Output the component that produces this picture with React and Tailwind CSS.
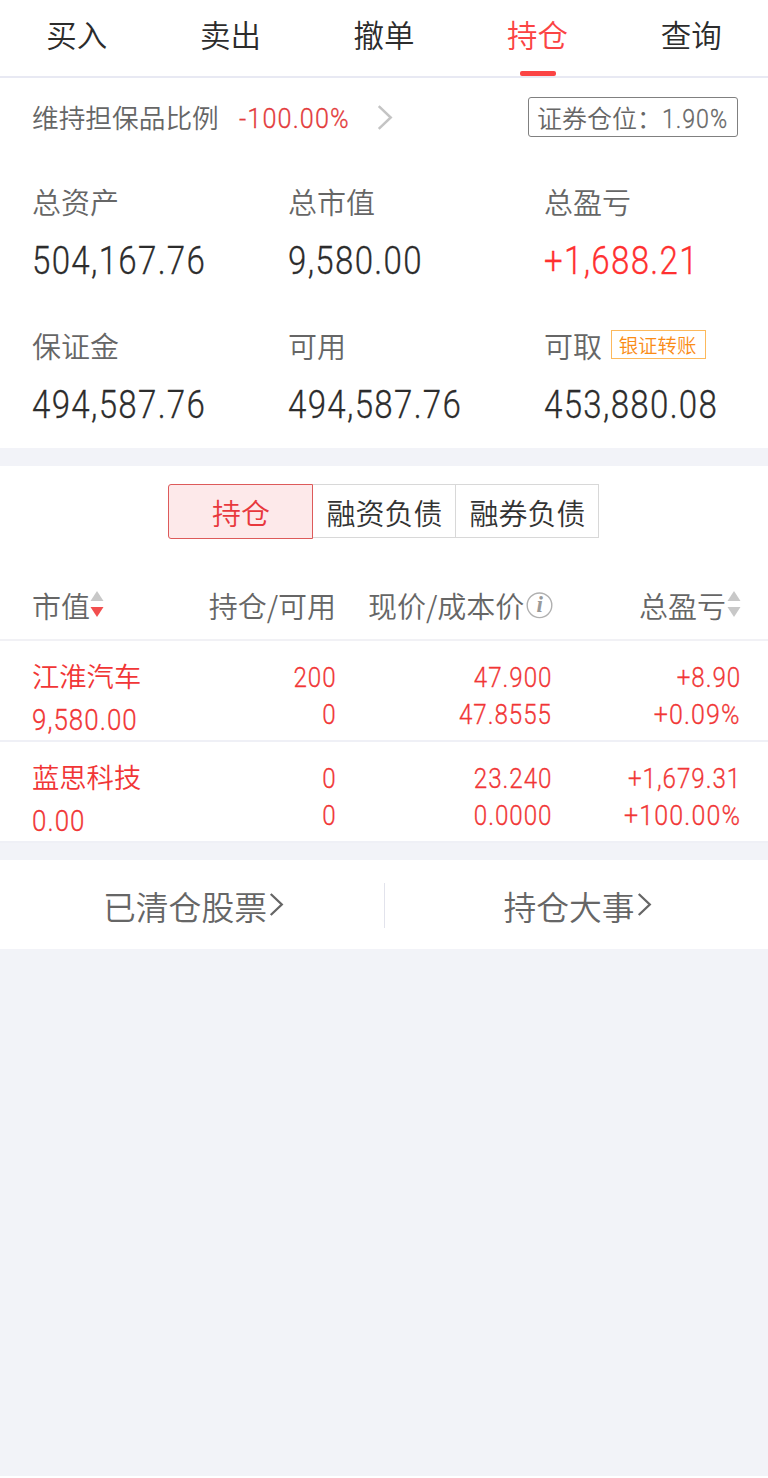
const tabs = ['买入', '卖出', '撤单', '持仓', '查询'];

const summary = [
  { label: '总资产', value: '504,167.76' },
  { label: '总市值', value: '9,580.00' },
  { label: '总盈亏', value: '+1,688.21', color: 'text-[#ff3030]' },
  { label: '保证金', value: '494,587.76' },
  { label: '可用', value: '494,587.76' },
  { label: '可取', value: '453,880.08', tag: '银证转账' },
];

const rows = [
  { name: '江淮汽车', value: '9,580.00', held: '200', usable: '0', price: '47.900', cost: '47.8555', gain: '+8.90', rate: '+0.09%' },
  { name: '蓝思科技', value: '0.00', held: '0', usable: '0', price: '23.240', cost: '0.0000', gain: '+1,679.31', rate: '+100.00%' },
];

// Narrow figures: Roboto condensed horizontally, anchored on the aligned edge.
function Num({ children, right = false, wide = false, className = '' }) {
  return (
    <span
      className={`inline-block whitespace-nowrap font-[Roboto,sans-serif] font-light [-webkit-text-stroke:0.3px_currentColor] ${right ? 'origin-right' : 'origin-left'} ${wide ? 'scale-x-[0.9] tracking-[0.045em]' : 'scale-x-[0.87] tracking-[0.04em]'} ${className}`}
    >
      {children}
    </span>
  );
}

function Sort({ down }) {
  return (
    <svg className="mb-[2px] h-[26px] w-[14px] shrink-0" viewBox="0 0 14 26">
      <path d="M7 0 L13.5 10 H0.5 Z" fill="#c8c8c8" />
      <path d="M0.5 16 H13.5 L7 26 Z" fill={down ? '#f24e4e' : '#c8c8c8'} />
    </svg>
  );
}

function Chevron({ className }) {
  return (
    <svg className={className} viewBox="0 0 14 24" fill="none" stroke="currentColor" strokeWidth="2.4">
      <path d="M1 1 L12.5 12 L1 23" />
    </svg>
  );
}

export default function App() {
  return (
    <div className="h-[1478px] w-[768px] overflow-hidden bg-white font-['Noto_Sans_CJK_SC',sans-serif] font-[350] text-[#666]">
      <div className="flex h-[1476px] flex-col bg-[#f2f3f8]">
        <nav className="grid h-[78px] shrink-0 grid-cols-5 border-b-2 border-[#e8e9f3] bg-white text-[30.5px] text-[#2c2c2c]">
          {tabs.map((t) => (
            <div key={t} className={`flex flex-col items-center justify-between ${t === '持仓' ? 'text-[#fb4444]' : ''}`}>
              <span className="leading-[68px]">{t}</span>
              {t === '持仓' && <span className="h-[5px] w-9 rounded-[2px] bg-[#fb4444]" />}
            </div>
          ))}
        </nav>

        <section className="h-[370px] shrink-0 bg-white">
          <div className="flex h-[78px] items-center pl-8 pr-[30px] text-[26.7px]">
            <span className="leading-[40px]">维持担保品比例</span>
            <Num wide className="ml-[20px] w-[137px] pt-[3px] text-[28px] leading-[40px] text-[#e33b3b]">-100.00%</Num>
            <Chevron className="h-[25px] w-[18px] text-[#c4c4c4]" />
            <div className="ml-auto flex h-10 w-[210px] items-center whitespace-nowrap rounded-[3px] border border-[#808080] pl-[8px] text-[25px] leading-[38px]">
              证券仓位：
              <Num className="w-0 pt-[3px] text-[26.7px]">1.90%</Num>
            </div>
          </div>
          <div className="grid grid-cols-3">
            {summary.map((s) => (
              <div key={s.label} className="h-[143.5px] pl-8 pt-[25px]">
                <div className="flex h-[40px] items-center text-[29px] leading-[40px]">
                  {s.label}
                  {s.tag && (
                    <span className="ml-[9px] h-[29px] w-[95px] border border-[#fcb95c] pr-[2px] text-center text-[19.4px] leading-[27px] text-[#fa8c16]">
                      {s.tag}
                    </span>
                  )}
                </div>
                <Num className={`mt-[15px] text-[38px] leading-[50px] ${s.color || 'text-[#2c2c2c]'}`}>{s.value}</Num>
              </div>
            ))}
          </div>
        </section>

        <section className="mt-[18px] h-[376px] shrink-0 bg-white">
          <div className="flex justify-center pt-[18px] pr-[2px] text-center text-[29px] leading-[54px] text-[#333]">
            <div className="h-[55px] w-[145px] rounded-l-[3px] border border-[#dd5a5a] bg-[#fde9ea] pl-[2px] text-[#e8383d]">持仓</div>
            <div className="h-[54px] w-[143px] border-y border-r border-[#d8d8d8] pl-[2px]">融资负债</div>
            <div className="h-[54px] w-[143px] border-y border-r border-[#d8d8d8] pl-[2px]">融券负债</div>
          </div>

          <div className="mt-[34px] flex h-[68px] items-center border-b-2 border-[#f1f1f5] pb-[2px] pl-8 pr-[27px] text-[29px] leading-[40px]">
            <div className="flex w-[144px] items-center">市值<Sort down /></div>
            <div className="w-[160px] text-right">持仓/可用</div>
            <div className="ml-[32px] flex items-center">
              现价/成本价
              <svg className="ml-[2px] h-[27px] w-[27px]" viewBox="0 0 27 27" fill="none">
                <circle cx="13.5" cy="13.3" r="12.3" stroke="#b0b0b0" strokeWidth="1.4" />
                <text x="13.7" y="20" textAnchor="middle" fontFamily="Liberation Serif" fontStyle="italic" fontWeight="bold" fontSize="23" fill="#999">i</text>
              </svg>
            </div>
            <div className="ml-auto flex items-center gap-[1px]">总盈亏<Sort /></div>
          </div>

          {rows.map((r) => (
            <div key={r.name} className="flex h-[101px] border-b-2 border-[#eff0f6] pl-8 pr-[27px] text-[27.8px] text-[#f13636]">
              <div className="w-[144px] pt-[12px]">
                <div className="text-[27.3px] leading-[44px]">{r.name}</div>
                <Num className="pt-[1px] text-[29.8px] leading-[44px]">{r.value}</Num>
              </div>
              <div className="flex w-[161px] flex-col items-end pt-[18px] leading-[37px]">
                <Num right>{r.held}</Num>
                <Num right>{r.usable}</Num>
              </div>
              <div className="flex w-[215px] flex-col items-end pt-[18px] leading-[37px]">
                <Num right>{r.price}</Num>
                <Num right>{r.cost}</Num>
              </div>
              <div className="flex flex-1 flex-col items-end pt-[18px] leading-[37px]">
                <Num right>{r.gain}</Num>
                <Num right wide>{r.rate}</Num>
              </div>
            </div>
          ))}
        </section>

        <section className="mt-[18px] flex h-[89px] shrink-0 items-center bg-white pt-[2px] text-[32.8px] leading-[48px]">
          <div className="flex flex-1 items-center justify-center pl-[3px]">
            已清仓股票<Chevron className="mb-[2px] ml-[2px] h-[23px] w-[15px]" />
          </div>
          <div className="h-[45px] w-px bg-[#e2e3ec]" />
          <div className="flex flex-1 items-center justify-center pl-[2px]">
            持仓大事<Chevron className="mb-[2px] ml-[2px] h-[23px] w-[15px]" />
          </div>
        </section>
      </div>
    </div>
  );
}
